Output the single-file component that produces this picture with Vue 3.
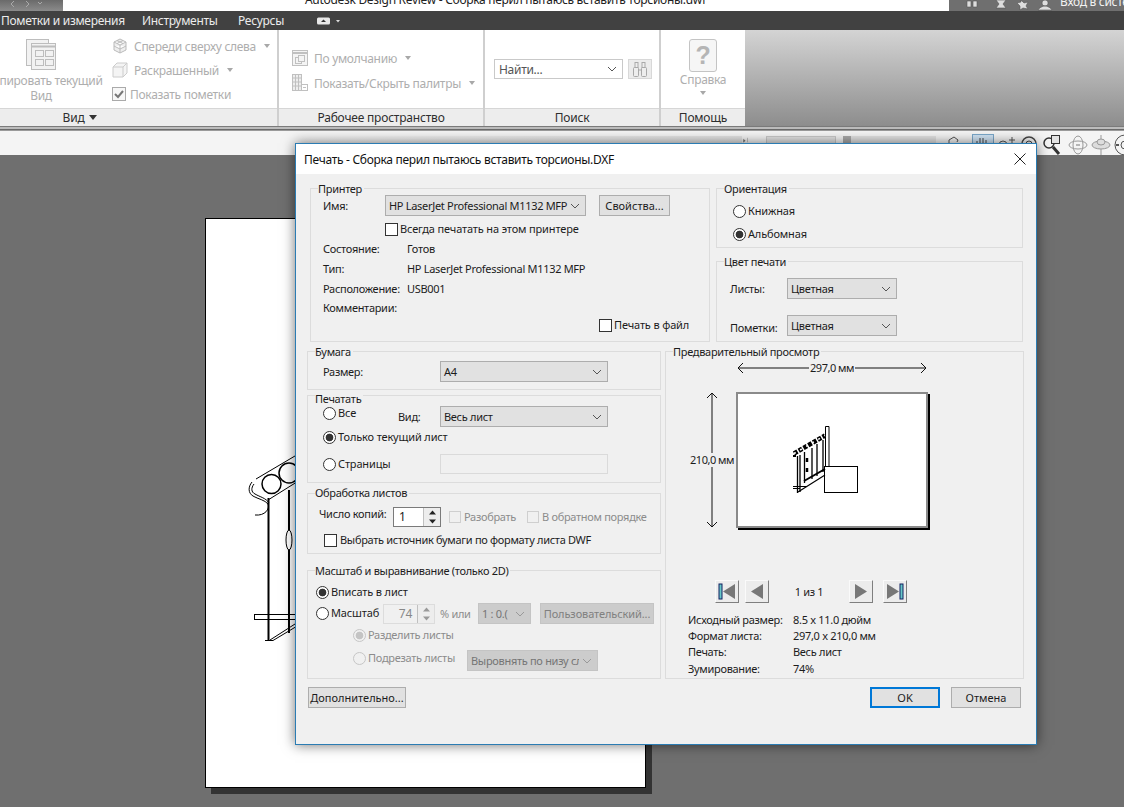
<script setup>
const infoRows = [
  ['Исходный размер:', '8.5 x 11.0 дюйм'],
  ['Формат листа:', '297,0 x 210,0 мм'],
  ['Печать:', 'Весь лист'],
  ['Зумирование:', '74%'],
]
const printerRows = [
  ['Состояние:', 'Готов'],
  ['Тип:', 'HP LaserJet Professional M1132 MFP'],
  ['Расположение:', 'USB001'],
  ['Комментарии:', ''],
]
</script>

<template>
  <div class="app">
    <header class="titlebar">
      <div class="tb-left">
        <svg width="40" height="11" viewBox="0 0 40 11"><path d="M10 1l-3 3 3 3M22 1l3 3-3 3M34 2l2 2 2-2" fill="none" stroke="#aaa" /></svg>
      </div>
      <div class="tb-title"><span>Autodesk Design Review - Сборка перил пытаюсь вставить торсионы.dwf</span></div>
      <div class="tb-right">
        <svg class="tb-icons" width="100" height="11" viewBox="0 0 100 11">
          <path d="M14 7V1h4v6zM20 7V1h4v6zM43 0h10l-3 4 3 4H43l3-4zM68 0l3 3 4-1-2 4 2 3-5-1-3 2v-4l-3-3 4-1zM91 6c-3 1-5 2-6 4h14c-1-2-3-3-6-4zM92 0a3 3 0 1 0 .1 0z" fill="#ddd" stroke="#555" stroke-width=".6" />
        </svg>
        <span>Вход в систему</span>
      </div>
    </header>

    <nav class="tabs">
      <span class="tab t1">Пометки и измерения</span>
      <span class="tab t2">Инструменты</span>
      <span class="tab t3">Ресурсы</span>
      <svg class="tab-ic" width="24" height="8" viewBox="0 0 24 8">
        <rect x="0" y="0.5" width="13" height="7" rx="1.5" fill="#e8e8e8" />
        <path d="M4 5l2.500-2.500L9 5z" fill="#333" />
        <path d="M19 3h4l-2 2.500z" fill="#ddd" />
      </svg>
    </nav>

    <section class="ribbon">
      <div class="panel p-view">
        <div class="panel-body">
          <div class="big">
            <svg width="32" height="32" viewBox="0 0 32 32" fill="#f2f2f2" stroke="#bdbdbd">
              <rect x="1.500" y="1.500" width="22" height="26" />
              <rect x="6.500" y="5.500" width="24" height="26" />
              <path d="M6.500 8.500h24" stroke-width="2" />
              <rect x="10.500" y="12.500" width="8" height="6" />
              <rect x="20.500" y="12.500" width="8" height="6" />
              <rect x="10.500" y="21.500" width="8" height="6" />
              <rect x="20.500" y="21.500" width="8" height="6" />
            </svg>
            <span>Скопировать текущий</span>
            <span>Вид</span>
          </div>
          <div class="small-col">
            <div class="rb-row">
              <svg width="16" height="16" viewBox="0 0 16 16" fill="#eee" stroke="#bbb"><path d="M8 1l6 3v8l-6 3-6-3V4zM2 4l6 3 6-3M8 7v8M5 2.500l6 3M11 2.500l-6 3M2 8l6 3 6-3" /></svg>
              <span>Спереди сверху слева</span><i class="tri ml8"></i>
            </div>
            <div class="rb-row">
              <svg width="16" height="16" viewBox="0 0 16 16" fill="#f4f4f4" stroke="#ccc"><path d="M1 5l4-4h10v10l-4 4H1zM1 5h10v10M11 5l4-4" /></svg>
              <span>Раскрашенный</span><i class="tri ml8"></i>
            </div>
            <div class="rb-row chk-row">
              <svg width="14" height="14" viewBox="0 0 14 14"><rect x=".5" y=".5" width="13" height="13" fill="#f7f7f7" stroke="#aaa" /><path d="M3 7l3 3 5-6" fill="none" stroke="#777" stroke-width="2" /></svg>
              <span>Показать пометки</span>
            </div>
          </div>
        </div>
        <footer class="panel-foot foot-view">Вид <i class="tri dark"></i></footer>
      </div>

      <div class="panel p-work">
        <div class="panel-body work-body">
          <div class="rb-row">
            <svg width="16" height="16" viewBox="0 0 16 16" fill="#f4f4f4" stroke="#c0c0c0"><rect x=".5" y=".5" width="15" height="15" /><path d="M.5 3h15" stroke-width="2" /><rect x="3.500" y="7.500" width="6" height="6" /><rect x="6.500" y="5.500" width="6" height="6" /></svg>
            <span>По умолчанию</span><i class="tri ml8"></i>
          </div>
          <div class="rb-row">
            <svg width="16" height="18" viewBox="0 0 16 18" fill="#eee" stroke="#c0c0c0"><rect x=".5" y=".5" width="9" height="16" /><path d="M.5 4h9M.5 8h9M.5 12h9M3.500 .5v16M6.500 .5v16" /><rect x="9.500" y="10.500" width="6" height="6" fill="#fff" /><path d="M11 13.500h3" /></svg>
            <span>Показать/Скрыть палитры</span><i class="tri ml8"></i>
          </div>
        </div>
        <footer class="panel-foot">Рабочее пространство</footer>
      </div>

      <div class="panel p-search">
        <div class="panel-body search-body">
          <div class="find">
            <span>Найти...</span>
            <svg class="chev" viewBox="0 0 10 6"><path d="M1 1l4 4 4-4" /></svg>
          </div>
          <div class="binoc">
            <svg width="16" height="16" viewBox="0 0 16 16" fill="#eee" stroke="#a9a9a9"><rect x="1.500" y="6.500" width="5" height="9" rx="1" /><rect x="9.500" y="6.500" width="5" height="9" rx="1" /><rect x="3" y="1.500" width="3" height="5" /><rect x="10" y="1.500" width="3" height="5" /><path d="M6.500 9h3" /></svg>
          </div>
        </div>
        <footer class="panel-foot">Поиск</footer>
      </div>

      <div class="panel p-help">
        <div class="panel-body help-body">
          <div class="qbox">?</div>
          <span>Справка</span>
          <i class="tri"></i>
        </div>
        <footer class="panel-foot">Помощь</footer>
      </div>

      <div class="ribbon-fill"></div>
    </section>

    <div class="rule"></div>

    <div class="toolbar">
      <div class="tool-track"></div>
      <svg class="tool-nav" width="60" height="12" viewBox="0 0 60 12"><path d="M4 4l5 4-5 4zM15 0v12" fill="#666" stroke="#666" /></svg>
      <div class="tool-scroll"><div class="tool-thumb"></div></div>
      <div class="tool-scale"></div>
      <div class="tool-icons">
        <svg width="20" height="20" viewBox="0 0 20 20" fill="none" stroke="#555"><path d="M4 14V6l5-3 4 3-1 2" /></svg>
        <div class="tool-hi"><svg width="18" height="16" viewBox="0 0 18 16" fill="none" stroke="#444"><path d="M4 14V6M7 14V3M10 14V3M13 14V5" /></svg></div>
        <svg width="20" height="20" viewBox="0 0 20 20" fill="none" stroke="#555"><circle cx="6" cy="11" r="4" /><path d="M15 3v8M12 6h6" /></svg>
        <svg width="18" height="20" viewBox="0 0 18 20" fill="none" stroke="#444"><circle cx="9" cy="10" r="7" stroke-width="1.500" /><circle cx="9" cy="10" r="3" /></svg>
      </div>
      <div class="tool-icons2">
        <svg width="24" height="24" viewBox="0 0 24 24" fill="none" stroke="#333"><circle cx="8" cy="10" r="5" stroke-width="1.500" /><path d="M12 14l6 7" stroke-width="3" /><rect x="10.500" y="2.500" width="8" height="8" fill="#e4e4e4" /></svg>
        <svg width="20" height="22" viewBox="0 0 20 22" fill="none" stroke="#999"><ellipse cx="10" cy="11" rx="5" ry="9" /><ellipse cx="10" cy="11" rx="9" ry="4" /><path d="M8 11h4" stroke="#777" /></svg>
        <svg width="20" height="22" viewBox="0 0 20 22" fill="#ddd" stroke="#999"><path d="M10 1v20" /><ellipse cx="10" cy="11" rx="9" ry="4" /><ellipse cx="10" cy="8" rx="4" ry="3" /></svg>
        <svg width="22" height="22" viewBox="0 0 22 22" fill="#f4f4f4" stroke="#555"><circle cx="11" cy="11" r="10" /><circle cx="11" cy="11" r="4" /><path d="M11 2v3M11 17v3M2 11h3M17 11h3" stroke-width="2" /></svg>
      </div>
    </div>

    <main class="canvas">
      <div class="paper">
        <svg class="sketch" width="100" height="200" viewBox="245 450 100 200" fill="none" stroke="#000">
          <path d="M256 479l44-26M252 482c-4 5-4 11 1 14 5 3 12 4 15 8 2 5-3 12-13 11M254 484c-3 4-3 8 1 10 5 3 11 4 14 9" />
          <circle cx="271.500" cy="484" r="9.500" stroke-width="1.500" />
          <circle cx="289" cy="473" r="10" stroke-width="1.500" />
          <path d="M268 500l32-20" />
          <path d="M268.500 498v142M289 490v143" stroke-width="2" />
          <ellipse cx="289" cy="540" rx="3" ry="10" fill="#fff" />
          <rect x="254.500" y="614.500" width="60" height="5" />
          <path d="M265 640.500h8l30-18M270 640l25-16" />
        </svg>
      </div>
    </main>

    <div class="dialog">
      <div class="dlg-title">
        <span>Печать - Сборка перил пытаюсь вставить торсионы.DXF</span>
        <svg width="12" height="12" viewBox="0 0 12 12"><path d="M.5 .5l11 11M11.500 .5l-11 11" stroke="#222" fill="none" /></svg>
      </div>

      <div class="top-row">
        <div class="group g-printer">
          <span class="legend">Принтер</span>
          <div class="line r-name">
            <span class="w62">Имя:</span>
            <div class="select w201"><span>HP LaserJet Professional M1132 MFP</span><svg class="chev" viewBox="0 0 10 6"><path d="M1 1l4 4 4-4" /></svg></div>
            <button class="btn w71">Свойства...</button>
          </div>
          <label class="line h14 always"><i class="check"></i><span class="txt">Всегда печатать на этом принтере</span></label>
          <div class="info-list">
            <div v-for="r in printerRows" :key="r[0]" class="info-line"><span class="w84">{{ r[0] }}</span><span>{{ r[1] }}</span></div>
          </div>
          <label class="line h14 tofile"><i class="check"></i><span class="txt">Печать в файл</span></label>
        </div>

        <div class="right-col">
          <div class="group g-orient">
            <span class="legend">Ориентация</span>
            <label class="line h14 o1"><i class="radio"></i><span class="txt">Книжная</span></label>
            <label class="line h14 o2"><i class="radio on"></i><span class="txt">Альбомная</span></label>
          </div>
          <div class="group g-color">
            <span class="legend">Цвет печати</span>
            <div class="line c-row">
              <span class="w57">Листы:</span>
              <div class="select w110"><span>Цветная</span><svg class="chev" viewBox="0 0 10 6"><path d="M1 1l4 4 4-4" /></svg></div>
            </div>
            <div class="line c-row">
              <span class="w57 low">Пометки:</span>
              <div class="select w110"><span>Цветная</span><svg class="chev" viewBox="0 0 10 6"><path d="M1 1l4 4 4-4" /></svg></div>
            </div>
          </div>
        </div>
      </div>

      <div class="bottom-row">
        <div class="left-col">
          <div class="group g-paper">
            <span class="legend">Бумага</span>
            <div class="line paper-line">
              <span class="w117">Размер:</span>
              <div class="select w168"><span>A4</span><svg class="chev" viewBox="0 0 10 6"><path d="M1 1l4 4 4-4" /></svg></div>
            </div>
          </div>

          <div class="group g-print">
            <span class="legend">Печатать</span>
            <div class="line pr-a">
              <label class="line h14 top w75"><i class="radio"></i><span class="txt">Все</span></label>
              <span class="w42">Вид:</span>
              <div class="select w168"><span>Весь лист</span><svg class="chev" viewBox="0 0 10 6"><path d="M1 1l4 4 4-4" /></svg></div>
            </div>
            <label class="line h14 pr-b"><i class="radio on"></i><span class="txt">Только текущий лист</span></label>
            <div class="line pr-c">
              <label class="line h14 w117"><i class="radio"></i><span class="txt">Страницы</span></label>
              <div class="pages"></div>
            </div>
          </div>

          <div class="group g-sheets">
            <span class="legend">Обработка листов</span>
            <div class="line sh-a">
              <span class="w74 up">Число копий:</span>
              <div class="spin">
                <span class="spin-val">1</span>
                <div class="spin-btns">
                  <svg width="17" height="9" viewBox="0 0 17 9"><path d="M5 6.500l3.500-4 3.500 4z" fill="#222" /></svg>
                  <svg width="17" height="9" viewBox="0 0 17 9"><path d="M5 2.500l3.500 4 3.500-4z" fill="#222" /></svg>
                </div>
              </div>
              <label class="line h14 dis w78 sh-check"><i class="check off"></i><span class="txt">Разобрать</span></label>
              <label class="line h14 dis"><i class="check off"></i><span class="txt">В обратном порядке</span></label>
            </div>
            <label class="line h14 sh-b"><i class="check"></i><span class="txt">Выбрать источник бумаги по формату листа DWF</span></label>
          </div>

          <div class="group g-scale">
            <span class="legend">Масштаб и выравнивание (только 2D)</span>
            <label class="line h14 sc-a"><i class="radio on"></i><span class="txt">Вписать в лист</span></label>
            <div class="line sc-b">
              <label class="line h14 w67"><i class="radio"></i><span class="txt">Масштаб</span></label>
              <div class="spin off">
                <span class="spin-val">74</span>
                <div class="spin-btns">
                  <svg width="17" height="9" viewBox="0 0 17 9"><path d="M5 6.500l3.500-4 3.500 4z" fill="#999" /></svg>
                  <svg width="17" height="9" viewBox="0 0 17 9"><path d="M5 2.500l3.500 4 3.500-4z" fill="#999" /></svg>
                </div>
              </div>
              <span class="pct">% или</span>
              <div class="select sel-off w53"><span>1 : 0.(</span><svg class="chev" viewBox="0 0 10 6"><path d="M1 1l4 4 4-4" /></svg></div>
              <button class="btn btn-off">Пользовательский...</button>
            </div>
            <label class="line h14 dis sc-c"><i class="radio off dot"></i><span class="txt">Разделить листы</span></label>
            <div class="line sc-d">
              <label class="line h14 dis w114 raised"><i class="radio off"></i><span class="txt">Подрезать листы</span></label>
              <div class="select sel-off w131"><span class="clip">Выровнять по низу сле</span><svg class="chev" viewBox="0 0 10 6"><path d="M1 1l4 4 4-4" /></svg></div>
            </div>
          </div>
        </div>

        <div class="group g-preview">
          <span class="legend">Предварительный просмотр</span>
          <div class="dim-h">
            <svg width="190" height="14" viewBox="0 0 190 14" fill="none" stroke="#111"><path d="M1 7h188M6 2L1 7l5 5M184 2l5 5-5 5" /></svg>
            <span>297,0 мм</span>
          </div>
          <div class="sheet-row">
            <div class="dim-v">
              <svg width="14" height="136" viewBox="0 0 14 136" fill="none" stroke="#111"><path d="M7 1v134M2 6l5-5 5 5M2 130l5 5 5-5" /></svg>
              <span>210,0 мм</span>
            </div>
            <div class="sheet">
              <svg width="188" height="132" viewBox="738 394 188 132" fill="none" stroke="#000">
                <rect x="824.500" y="466.500" width="33" height="26" stroke-width="1" />
                <path d="M825.500 466V426.500h3.500V466" />
                <path d="M794 453.500l31-18" stroke-width="4.500" stroke-dasharray="4 1.500" />
                <path d="M794 453.500l31-18" stroke="#fff" stroke-width="1.500" stroke-dasharray="2 5" />
                <path d="M793 456h3" stroke-width="2" />
                <path d="M797.500 456v37M800 455v37M804.500 452v31M812 448v31M817 444v32M823 440v32" stroke-width="1.300" />
                <path d="M793 486.500h14M793 488.500h7M798 492l27-17" stroke-width="1.200" />
                <path d="M804 481l21-12" stroke-width="2" />
                <path d="M807 458v4M807 468v4" stroke-width="2.500" />
              </svg>
            </div>
          </div>
          <div class="nav-row">
            <button class="nav"><svg width="18" height="17" viewBox="0 0 18 17"><path d="M17 1v15L5 8.500z" fill="#777" /><rect x="1" y="1" width="3" height="15" fill="#67c7c7" stroke="#102060" /></svg></button>
            <button class="nav ml6"><svg width="16" height="17" viewBox="0 0 16 17"><path d="M14 1v15L2 8.500z" fill="#777" /></svg></button>
            <span class="nav-label">1 из 1</span>
            <button class="nav"><svg width="16" height="17" viewBox="0 0 16 17"><path d="M2 1v15l12-7.500z" fill="#777" /></svg></button>
            <button class="nav ml10"><svg width="18" height="17" viewBox="0 0 18 17"><path d="M1 1v15l12-7.500z" fill="#777" /><rect x="14" y="1" width="3" height="15" fill="#67c7c7" stroke="#102060" /></svg></button>
          </div>
          <div class="info-grid">
            <template v-for="r in infoRows" :key="r[0]"><span>{{ r[0] }}</span><span>{{ r[1] }}</span></template>
          </div>
        </div>
      </div>

      <div class="btn-row">
        <button class="btn w98">Дополнительно...</button>
        <div class="dlg-actions">
          <button class="btn w70 primary">OK</button>
          <button class="btn w70">Отмена</button>
        </div>
      </div>
    </div>
  </div>
</template>

<style>
html, body { margin: 0; padding: 0; background: #6f6f6f; }
</style>

<style scoped>
* { box-sizing: border-box; }
.app {
  position: relative; width: 1124px; height: 807px; overflow: hidden;
  display: flex; flex-direction: column; background: #6f6f6f;
  font-family: "Noto Sans", "Open Sans", sans-serif; font-size: 11px; color: #1c1c1c;
  letter-spacing: -.3px;
}

/* window title */
.titlebar { height: 11px; flex: none; display: flex; background: #fff; overflow: hidden; }
.tb-left { width: 63px; background: linear-gradient(#6a6a6a, #8b8b8b); padding-left: 4px; }
.tb-left svg { display: block; }
.tb-title { flex: 1; display: flex; align-items: flex-end; padding-left: 242px; font-size: 12px; color: #222; white-space: nowrap; }
.tb-title span { line-height: 16px; margin-bottom: 3px; flex: none; }
.tb-right { width: 175px; background: #6f6f6f; display: flex; align-items: flex-end; white-space: nowrap; color: #f2f2f2; font-size: 12px; overflow: hidden; }
.tb-right span { line-height: 14px; margin-bottom: 2px; margin-left: 19px; flex: none; }
.tb-icons { flex: none; width: 100px; margin-right: -12px; margin-left: 4px; }

/* tabs */
.tabs { height: 19px; flex: none; background: #414141; display: flex; align-items: center; color: #ececec; font-size: 12px; }
.tab { white-space: nowrap; flex: none; }
.t1 { margin-left: 1px; width: 141px; }
.t2 { width: 96px; }
.t3 { width: 79px; }
.tab-ic { flex: none; }

/* ribbon */
.ribbon { height: 96px; flex: none; display: flex; background: #fff; }
.panel { flex: none; display: flex; flex-direction: column; border-right: 2px solid #cfcfcf; overflow: hidden; }
.p-view { width: 279px; }
.p-work { width: 206px; }
.p-search { width: 176px; }
.p-help { width: 84px; border-right: 0; }
.panel-body { height: 78px; flex: none; display: flex; color: #aeaeae; font-size: 12px; white-space: nowrap; }
.panel-foot {
  height: 18px; flex: none; background: #ededed; border-top: 1px solid #d6d6d6;
  display: flex; align-items: center; justify-content: center; gap: 5px;
  color: #2e2e2e; font-size: 12px; line-height: 1; letter-spacing: -.2px;
}
.foot-view { padding-right: 117px; }
.big { flex: none; width: 120px; margin-left: -19px; display: flex; flex-direction: column; align-items: center; padding-top: 8px; line-height: 15px; }
.big svg { margin-bottom: 3px; flex: none; }
.small-col { margin-left: 11px; padding-top: 4px; display: flex; flex-direction: column; }
.rb-row { height: 24px; display: flex; align-items: center; gap: 6px; flex: none; }
.rb-row svg { flex: none; }
.chk-row { gap: 4px; }
.work-body { flex-direction: column; padding: 16px 0 0 13px; gap: 1px; }
.tri { display: inline-block; width: 0; height: 0; border: 3px solid transparent; border-top: 4px solid #a8a8a8; border-bottom: 0; flex: none; }
.tri.dark { border-top-color: #333; border-left-width: 4px; border-right-width: 4px; border-top-width: 5px; }
.ml8 { margin-left: 2px; }
.search-body { padding: 29px 0 0 9px; gap: 5px; align-items: flex-start; }
.find { width: 129px; height: 20px; border: 1px solid #c9c9c9; display: flex; align-items: center; justify-content: space-between; padding: 0 5px 0 4px; color: #555; }
.binoc { width: 24px; height: 20px; background: #ececec; border: 1px solid #d8d8d8; display: flex; align-items: center; justify-content: center; }
.help-body { flex-direction: column; align-items: center; padding-top: 9px; }
.qbox { width: 28px; height: 33px; border: 1px solid #c4c4c4; border-radius: 3px; background: #f6f6f6; color: #b5b5b5; font: bold 25px/31px "Liberation Sans", sans-serif; text-align: center; margin-bottom: 0; }
.help-body span { line-height: 16px; }
.help-body .tri { margin-top: 3px; }
.ribbon-fill { flex: 1; background: linear-gradient(#d4d4d4, #8d8d8d); }

.rule { height: 5px; flex: none; background: linear-gradient(#7b7b7b 0 1px, #bcbcbc 1px 3px, #6a6a6a 3px 4px, #9a9a9a 4px); }

/* toolbar */
.toolbar { height: 24px; flex: none; background: #f4f4f4; display: flex; align-items: flex-start; }
.tool-track { width: 742px; height: 12px; margin-top: 5px; background: linear-gradient(90deg, #f4f4f4 40%, #e2e2e2); flex: none; }
.tool-nav { flex: none; margin-top: 3px; width: 22px; }
.tool-scroll { width: 70px; height: 12px; margin: 5px 7px 0 2px; border: 1px solid #c9c9c9; background: #e3e3e3; flex: none; }
.tool-scale { width: 93px; height: 12px; margin-top: 5px; background: linear-gradient(90deg, #a9a9a9 0 8px, #e2e2e2 8px); flex: none; }
.tool-icons { display: flex; gap: 3px; margin: 3px 0 0 9px; flex: none; }
.tool-icons .tool-hi { margin-left: 4px; }
.tool-hi { width: 22px; height: 18px; background: #cfe3f4; border: 1px solid #7aa7c9; flex: none; }
.tool-icons2 { display: flex; gap: 3px; flex: none; align-items: center; margin: 2px 0 0 3px; }

/* canvas */
.canvas { flex: 1; position: relative; }
.paper { position: absolute; left: 205px; top: 63px; width: 441px; height: 570px; background: #fff; border: 1px solid #000; box-shadow: 6px 6px 0 #333; }
.sketch { position: absolute; left: 39px; top: 231px; }

/* dialog */
.dialog {
  position: absolute; left: 295px; top: 143px; width: 742px; height: 602px;
  background: #f0f0f0; border: 1px solid #2b7cb3; box-shadow: 0 0 12px rgba(0, 0, 0, .55);
  display: flex; flex-direction: column;
}
.dlg-title { height: 30px; flex: none; background: #fff; display: flex; align-items: center; justify-content: space-between; padding: 0 10px 0 8px; font-size: 12px; color: #111; }
.top-row { display: flex; gap: 6px; padding: 14px 0 0 14px; flex: none; }
.right-col { display: flex; flex-direction: column; gap: 13px; width: 307px; }
.bottom-row { display: flex; gap: 4px; padding: 9px 0 0 11px; flex: none; }
.left-col { width: 354px; display: flex; flex-direction: column; }

.group { position: relative; border: 1px solid #dcdcdc; flex: none; }
.legend { position: absolute; top: -8px; left: 7px; background: #f0f0f0; padding: 0 2px 0 0; line-height: 15px; white-space: nowrap; }
.g-print .legend { top: -5px; }
.g-sheets .legend { top: -9px; }

.g-printer { width: 400px; height: 154px; padding: 6px 0 0 12px; }
.g-orient { height: 60px; padding-left: 16px; }
.g-color { height: 81px; padding-left: 13px; }
.g-paper { height: 39px; padding-left: 15px; }
.g-print { height: 88px; margin-top: 5px; padding-left: 15px; }
.g-sheets { height: 61px; margin-top: 10px; }
.g-scale { height: 109px; margin-top: 16px; }
.g-preview { width: 359px; height: 328px; }

.line { display: flex; align-items: center; white-space: nowrap; flex: none; }
.h14 { height: 14px; }
.txt { padding-bottom: 2px; letter-spacing: -.15px; }
.dis .txt, .sh-b .txt { letter-spacing: -.3px; }
.r-name { height: 21px; }
.always { margin: 6px 0 0 62px; gap: 2px; }
.info-list { margin-top: 3px; }
.info-line { height: 19.700px; display: flex; align-items: center; }
.tofile { margin: 1px 0 0 276px; gap: 2px; }
.o1 { margin-top: 15px; gap: 2px; }
.o2 { margin-top: 9px; gap: 2px; }
.c-row { height: 21px; margin-top: 16px; }
.low { position: relative; top: 2px; }
.paper-line { height: 21px; margin-top: 9px; }
.pr-a { height: 21px; margin-top: 10px; }
.top { align-self: flex-start; gap: 2px; }
.pr-b { margin-top: 3px; gap: 2px; }
.pr-c { height: 20px; margin-top: 10px; }
.pr-c label { gap: 2px; }
.sh-a { height: 20px; margin-top: 13px; padding-left: 11px; }
.up { position: relative; top: -4px; }
.sh-check { margin-left: 8px; }
.dis { color: #8c8c8c; gap: 3px; }
.sh-b { margin: 6px 0 0 16px; gap: 3px; }
.sc-a { margin: 14px 0 0 8px; gap: 2px; }
.sc-b { height: 21px; margin: 4px 0 0 8px; }
.sc-b label { gap: 2px; }
.pct { width: 38px; margin-left: 5px; color: #8c8c8c; }
.sc-c { margin: 4px 0 0 45px; gap: 2px; }
.sc-d { height: 21px; margin: 8px 0 0 45px; }
.sc-d label { gap: 2px; }
.raised { align-self: flex-start; margin-top: 1px; }

.w42 { width: 42px; } .w57 { width: 57px; } .w62 { width: 62px; flex: none; } .w67 { width: 67px; } .w74 { width: 74px; flex: none; }
.w75 { width: 75px; } .w78 { width: 78px; } .w84 { width: 84px; flex: none; } .w114 { width: 114px; } .w117 { width: 117px; }
.w53 { width: 53px; } .w71 { width: 71px; margin-left: 13px; } .w98 { width: 98px; } .w70 { width: 70px; }
.w110 { width: 110px; } .w131 { width: 131px; } .w168 { width: 168px; } .w201 { width: 201px; }

.select {
  height: 21px; background: #e1e1e1; border: 1px solid #adadad; flex: none;
  display: flex; align-items: center; justify-content: space-between; padding: 0 5px 0 3px; overflow: hidden; white-space: nowrap;
}
.sel-off { background: #ccc; border-color: #c4c4c4; color: #757575; }
.clip { overflow: hidden; }
.chev { width: 10px; height: 6px; flex: none; fill: none; stroke: #555; stroke-width: 1; margin-left: 3px; }
.sel-off .chev { stroke: #999; }
.btn {
  height: 21px; background: #e1e1e1; border: 1px solid #adadad; padding: 0; flex: none;
  font: inherit; color: inherit; text-align: center; white-space: nowrap; letter-spacing: normal;
}
.primary { border: 2px solid #0078d7; }
.btn-off { width: 114px; margin-left: 9px; background: #ccc; border-color: #c4c4c4; color: #808080; letter-spacing: -.1px; }
.check { display: inline-block; width: 13px; height: 13px; background: #fff; border: 1px solid #333; flex: none; }
.check.off { width: 12px; height: 12px; background: #f0f0f0; border-color: #cfcfcf; }
.radio { display: inline-block; width: 13px; height: 13px; border-radius: 50%; background: #fff; border: 1px solid #333; flex: none; }
.radio.on { background: radial-gradient(circle, #333 0 3.500px, #fff 4.200px); }
.radio.off { background: #f0f0f0; border-color: #c6c6c6; }
.radio.dot { background: radial-gradient(circle, #c4c4c4 0 3.500px, #f0f0f0 4.200px); }
.pages { width: 168px; height: 20px; border: 1px solid #dadada; background: #f0f0f0; flex: none; }
.spin { width: 48px; height: 20px; border: 1px solid #7a7a7a; background: #fff; display: flex; flex: none; }
.spin-val { flex: 1; padding-left: 5px; line-height: 18px; font-size: 12px; }
.spin-btns { width: 17px; background: #ededed; display: flex; flex-direction: column; justify-content: center; flex: none; border-left: 1px solid #c0c0c0; }
.spin-btns svg { display: block; }
.spin.off { width: 52px; height: 20px; border-color: #dcdcdc; background: #f0f0f0; color: #888; }
.spin.off .spin-val { text-align: right; padding-right: 5px; padding-left: 0; }

.dim-h { position: relative; width: 190px; height: 14px; margin: 9px 0 0 71px; display: flex; justify-content: center; }
.dim-h svg { position: absolute; left: 0; top: 0; }
.dim-h span { position: relative; background: #f0f0f0; padding: 0 1px; line-height: 14px; letter-spacing: -.5px; }
.sheet-row { display: flex; margin: 17px 0 0 24px; }
.dim-v { position: relative; width: 44px; height: 136px; margin-right: 2px; display: flex; align-items: center; justify-content: center; flex: none; }
.dim-v svg { position: absolute; left: 15px; top: 0; }
.dim-v span { position: relative; background: #f0f0f0; line-height: 14px; white-space: nowrap; letter-spacing: -.5px; }
.sheet { width: 192px; height: 136px; border: 2px solid #8a8a8a; background: #fff; box-shadow: 2px 2px 0 #000; flex: none; }
.sheet svg { display: block; }
.nav-row { display: flex; align-items: center; margin: 52px 0 0 49px; }
.nav { width: 24px; height: 23px; padding: 0; background: #ececec; border: 1px solid; border-color: #fafafa #7f7f7f #7f7f7f #fafafa; display: flex; align-items: center; justify-content: center; flex: none; }
.ml6 { margin-left: 6px; }
.ml10 { margin-left: 10px; }
.nav-label { width: 80px; text-align: center; }
.info-grid { display: grid; grid-template-columns: 105px 1fr; grid-auto-rows: 16.330px; align-items: center; margin: 8px 0 0 22px; white-space: nowrap; }

.btn-row { display: flex; justify-content: space-between; padding: 8px 15px 0 12px; flex: none; }
.dlg-actions { display: flex; gap: 11px; }
</style>
